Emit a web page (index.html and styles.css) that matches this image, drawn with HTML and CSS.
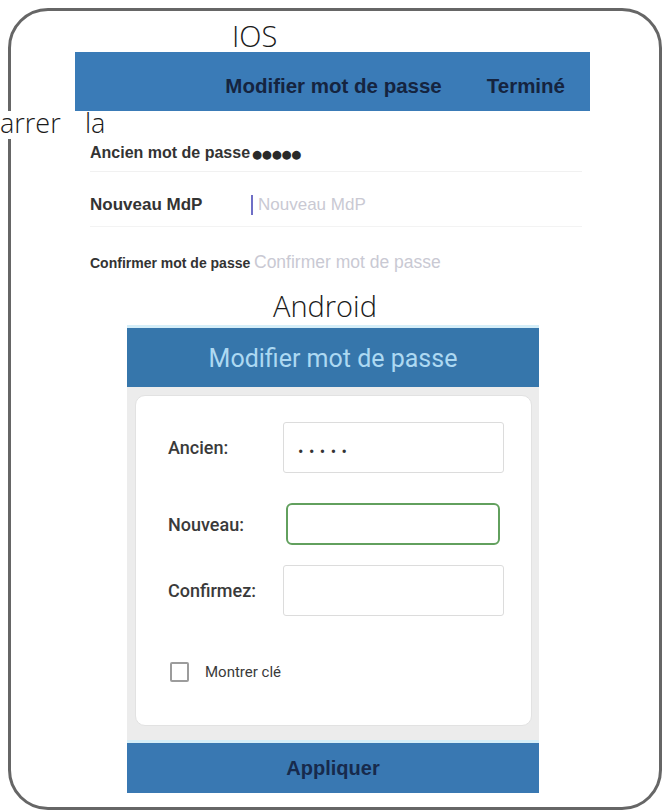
FILE: index.html
```html
<!DOCTYPE html>
<html lang="fr">
<head>
<meta charset="utf-8">
<title>Modifier mot de passe</title>
<link rel="stylesheet" href="styles.css">
</head>
<body>
<div class="frame">
  <div class="title title-ios">IOS</div>
  <div class="ios-bar">
    <span class="ios-bar-title">Modifier mot de passe</span>
    <span class="ios-bar-done">Terminé</span>
  </div>
  <div class="annot"><span class="annot-a">arrer</span><span class="annot-b">la</span></div>
  <div class="ios-list">
    <div class="ios-row ios-row-1">
      <span class="ios-label ios-label-1">Ancien mot de passe</span>
      <span class="ios-dots">●●●●●</span>
    </div>
    <div class="ios-row ios-row-2">
      <span class="ios-label ios-label-2">Nouveau MdP</span>
      <span class="ios-field"><span class="cursor"></span><span class="ph">Nouveau MdP</span></span>
    </div>
    <div class="ios-row ios-row-3">
      <span class="ios-label ios-label-3">Confirmer mot de passe</span>
      <span class="ph ph-3">Confirmer mot de passe</span>
    </div>
  </div>
  <div class="title title-android">Android</div>
  <div class="android">
    <div class="and-header">Modifier mot de passe</div>
    <div class="and-body">
      <div class="and-card">
        <div class="and-row and-row-1">
          <span class="and-label">Ancien:</span>
          <span class="and-input"><span class="and-dots">•••••</span></span>
        </div>
        <div class="and-row and-row-2">
          <span class="and-label">Nouveau:</span>
          <span class="and-input and-input-focus"></span>
        </div>
        <div class="and-row and-row-3">
          <span class="and-label">Confirmez:</span>
          <span class="and-input"></span>
        </div>
        <div class="and-check">
          <span class="checkbox"></span>
          <span class="check-label">Montrer clé</span>
        </div>
      </div>
    </div>
    <div class="and-button">Appliquer</div>
  </div>
</div>
</body>
</html>
```

FILE: styles.css
```css
* { box-sizing: border-box; }
html, body { margin: 0; padding: 0; background: #ffffff; overflow: hidden; }
body { width: 668px; height: 812px; font-family: "Liberation Sans", Arial, sans-serif; }

.frame {
  margin: 8px;
  width: 654px;
  height: 802px;
  border: 3px solid #666666;
  border-radius: 40px;
  background: #ffffff;
}

.title {
  font-family: "Open Sans", "Liberation Sans", sans-serif;
  font-weight: 300;
  font-size: 29px;
  line-height: 29px;
  color: #1a1a1a;
}
.title-ios { padding: 10px 0 0 221px; margin-bottom: 2px; }
.title-android { height: 41px; padding: 7px 0 0 262px; }

.ios-bar {
  margin-left: 64px;
  width: 515px;
  height: 59px;
  background: #3a7bb7;
  display: flex;
  justify-content: flex-end;
  align-items: center;
  gap: 45px;
  padding: 8px 25px 0 0;
  font-weight: bold;
  font-size: 20.5px;
  color: #15243f;
}

.annot {
  margin-left: -11px;
  height: 28px;
  font-family: "Open Sans", "Liberation Sans", sans-serif;
  font-weight: 300;
  font-size: 27px;
  line-height: 24px;
  color: #1a1a1a;
  display: flex;
}
.annot-a { display: inline-block; width: 85px; background: #ffffff; }
.annot-b { display: inline-block; }

.ios-list { margin-left: 79px; width: 492px; }
.ios-row {
  display: grid;
  grid-template-columns: 163px 1fr;
  align-items: baseline;
}
.ios-row-1 { height: 33px; padding-top: 4px; line-height: 20px; border-bottom: 1px solid #f1f1f1; }
.ios-row-2 { height: 55px; padding-top: 11px; line-height: 22px; align-items: center; border-bottom: 1px solid #f3f3f3; }
.ios-row-3 { height: 57px; padding-top: 24px; line-height: 22px; }

.ios-label { font-weight: bold; color: #333333; white-space: nowrap; }
.ios-label-1 { font-size: 16px; }
.ios-label-2 { font-size: 17px; }
.ios-label-3 { font-size: 14px; }

.ios-dots {
  font-family: "DejaVu Sans", sans-serif;
  font-size: 11.5px;
  letter-spacing: -0.2px;
  color: #2a2a2a;
  margin-left: -1px;
}
.ios-field { display: flex; align-items: center; gap: 5px; margin-left: -2px; }
.cursor { display: inline-block; width: 2px; height: 20px; background: #6f6fc6; }
.ph { font-size: 17px; color: #c9c9d3; white-space: nowrap; }
.ph-3 { font-size: 17.5px; margin-left: 1px; }

.android { margin-left: 116px; width: 412px; }
.and-header {
  border-top: 3px solid #d5eef8;
  height: 62px;
  background: #3676ab;
  color: #add9f2;
  font-family: Roboto, "Liberation Sans", sans-serif;
  font-size: 25px;
  line-height: 59px;
  padding-top: 1px;
  text-align: center;
}
.and-body {
  background: #ececec;
  padding: 8px 7px 14px 8px;
}
.and-card {
  height: 331px;
  background: #ffffff;
  border: 1px solid #e2e2e2;
  border-radius: 10px;
  padding: 26px 27px 0 32px;
  font-family: Roboto, "Liberation Sans", sans-serif;
}
.and-row {
  display: grid;
  grid-template-columns: 115px 221px;
  align-items: center;
  height: 51px;
}
.and-row-2 { margin-top: 20px; height: 52px; padding-top: 10px; }
.and-row-3 { margin-top: 20px; }
.and-label { font-size: 18px; font-weight: 500; color: #3a3a3a; }
.and-input {
  height: 51px;
  border: 1px solid #dcdcdc;
  border-radius: 3px;
  background: #ffffff;
  display: flex;
  align-items: center;
  padding-left: 14px;
}
.and-input-focus {
  height: 42px;
  margin: 0 4px 0 3px;
  border: 2px solid #62a05e;
  border-radius: 6px;
}
.and-dots { font-size: 16px; letter-spacing: 5.5px; color: #333333; padding-top: 8px; }

.and-check {
  margin-top: 46px;
  display: flex;
  align-items: center;
  gap: 16px;
  padding-left: 2px;
}
.checkbox {
  width: 19px;
  height: 20px;
  border: 2px solid #9c9c9c;
  border-radius: 2px;
}
.check-label { font-size: 15px; color: #3a3a3a; }

.and-button {
  border-top: 3px solid #d5eef8;
  height: 53px;
  background: #3978b2;
  color: #172a4c;
  font-weight: bold;
  font-size: 20px;
  line-height: 50px;
  text-align: center;
}
```
